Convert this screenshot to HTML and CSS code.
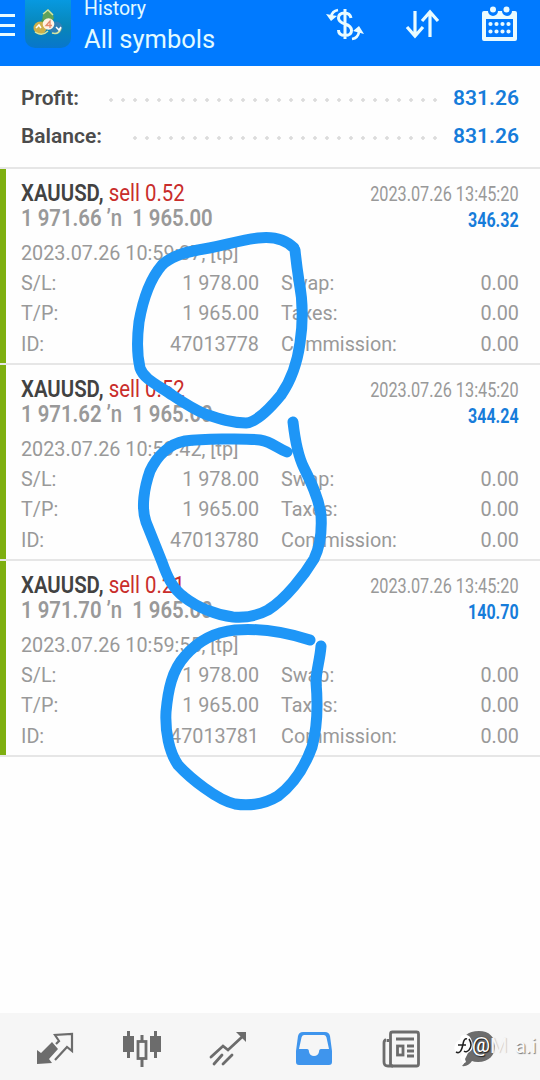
FILE: index.html
```
<!DOCTYPE html>
<html lang="en">
<head>
  <meta charset="UTF-8" />
  <meta name="viewport" content="width=device-width, initial-scale=1.0"/>
  <title>History</title>
  <link rel="stylesheet" href="styles.css">
</head>
<body>
  <div class="app">
    <header class="header">
      <div class="burger"><i></i><i></i><i></i></div>
      <div class="logo">
        <svg width="46" height="48" viewBox="0 0 46 48">
          <path d="M22 9l7 9-5 7-9-1z" fill="#4f9a4c"/>
          <circle cx="23" cy="17" r="5.5" fill="#5fa25a"/>
          <circle cx="15" cy="28" r="6.500" fill="#cdb04a"/>
          <circle cx="31" cy="28" r="6.500" fill="#3180b5"/>
          <path d="M10 32q7 5 13-1M27 33q7 2 9-5M18 14l5-4 5 5" fill="none" stroke="#d5e6a2" stroke-width="1.500"/>
          <circle cx="23.500" cy="24" r="5.800" fill="#fff3e5"/>
          <path d="M25 28v-7l-4 4.500h6" fill="none" stroke="#e48a6d" stroke-width="1.300"/>
          <path d="M11 28l3-3 2 3M31 27l3 3 2-3" fill="none" stroke="#fff" stroke-width="1.500"/>
        </svg>
      </div>
      <div class="titles">
        <div class="title-small">History</div>
        <div class="title-big">All symbols</div>
      </div>
      <div class="actions">
        <svg width="38" height="36" viewBox="0 0 38 36" fill="none" stroke="#e9fbff" stroke-width="3">
          <path d="M25 12q-1-5-6.500-5-6 0-6 5 0 4 6.500 6 6.500 2 6.500 6.500 0 5-6.500 5-6.500 0-6.500-5.500M19 3v30"/>
          <path d="M12 4q-6 1-7 7M26 33q6-1 7-7" stroke-width="2.600"/>
          <path d="M0 8l5 7 6-5zM27 25l6-5 5 8z" fill="#e9fbff" stroke="none"/>
        </svg>
        <svg width="36" height="32" viewBox="0 0 36 32" fill="none" stroke="#e9fbff" stroke-width="3.200">
          <path d="M10 2v25M2 18l8 9 8-9M25 28V3M17 12l8-9 8 9"/>
        </svg>
        <svg width="36" height="36" viewBox="0 0 36 36">
          <path d="M2 5h4a5 5 0 0 0 10 0h4a5 5 0 0 0 10 0h3a2 2 0 0 1 2 2v26a2 2 0 0 1-2 2H2a2 2 0 0 1-2-2V7q0-2 2-2zM4 13v18h27V13z" fill="#e9fbff" fill-rule="evenodd"/>
          <circle cx="11" cy="3.500" r="3" fill="#e9fbff"/><circle cx="24.500" cy="3.500" r="3" fill="#e9fbff"/>
          <path d="M8.500 18h20M8.500 25.500h20" stroke="#e9fbff" stroke-width="4.200" stroke-linecap="round" stroke-dasharray="0 6"/>
        </svg>
      </div>
    </header>

    <section class="summary">
      <div class="sum-row"><span>Profit:</span><div class="dots"></div><b>831.26</b></div>
      <div class="sum-row"><span>Balance:</span><div class="dots"></div><b>831.26</b></div>
    </section>

    <main class="deals" id="deals"></main>

    <nav class="tabs">
      <a><svg width="38" height="34" viewBox="0 0 38 34">
        <path d="M1 32V18l4 3L16 10l6 7-9 10 3 4z" fill="#6c6c6c"/>
        <path d="M20 12l3-3-4-6 17-1v17l-5-4-12 13" fill="none" stroke="#6c6c6c" stroke-width="2.200"/>
      </svg></a>
      <a><svg width="40" height="38" viewBox="0 0 40 38">
        <path d="M1 6h4V1h3v5h4v16H8v6H5v-6H1zM28 6h4V1h3v5h4v16h-4v6h-3v-6h-4z" fill="#6c6c6c"/>
        <path d="M20 5v7M20 29v8" stroke="#6c6c6c" stroke-width="3"/><rect x="16" y="11.500" width="8" height="17" fill="none" stroke="#6c6c6c" stroke-width="2.800"/>
      </svg></a>
      <a><svg width="38" height="36" viewBox="0 0 38 36" fill="none" stroke="#6c6c6c" stroke-width="2.800" stroke-linecap="round">
        <path d="M2 26l12-11 5 4L33 6M5 33l8-9M14 33l9-9"/>
        <path d="M27 1h10v10z" fill="#6c6c6c" stroke="none"/>
      </svg></a>
      <a><svg width="38" height="36" viewBox="0 0 38 36">
        <path d="M8 1h22q4 0 5 4l2 15v11q0 3-3 3H4q-3 0-3-3V20L3 5q1-4 5-4zM9 4Q7 4 6.500 6.500L4 18h8q2 0 2 3 1 4 5 4t5-4q0-3 2-3h8L31.500 6.500Q31 4 29 4z" fill="#3f95ed" fill-rule="evenodd"/>
      </svg></a>
      <a><svg width="38" height="38" viewBox="0 0 38 38" fill="none" stroke="#6c6c6c" stroke-width="2.800">
        <rect x="8.500" y="2" width="28" height="34" rx="2"/>
        <path d="M4 10q-2 0-2 3v19q0 4 4 4h5M6 9v3M14 9h18M25 16h7M25 21h7M25 26h7"/><rect x="15.500" y="16" width="5.500" height="9"/>
      </svg></a>
      <a class="chat"><svg width="40" height="38" viewBox="0 0 40 38">
        <path d="M23 1c10 0 16 6 16 15s-6 16-17 16q-4 0-6-1-4 6-10 5 3-3 3-8-4-5-4-12C5 7 12 1 23 1z" fill="#6c6c6c"/>
      </svg></a>
      <div class="watermark">
        <svg width="20" height="34" viewBox="0 0 20 34"><path d="M7 3Q15-1 18 8q3 8-4 12l-3 6 1 3-3 2-3-7 2-4Q-2 20 1 12q2-5 5-5z" fill="#fff"/><path d="M2 19q5 3 7-8 1-6 4-5M4 12h8M15 6q4 6 0 11-3 3-5 1" fill="none" stroke="#222" stroke-width="1.500"/></svg>
        <span class="at">@</span><span class="ghost">M</span><span class="ai">a.i</span>
      </div>
    </nav>

    <!-- marker strokes over the list -->
    <svg class="marker" width="540" height="1080" viewBox="0 0 540 1080">
      <path d="M294 248C286 240 274 236 258 238C240 240 219 247 198 250C181 253 170 257 162 265C150 279 143 299 139 322C137 338 137 355 140 368C144 380 160 386 172 395C184 403 193 409 205 414C220 419 232 423 246 423C258 422 272 406 281 395C290 382 297 365 300 343C303 323 303 301 299 281C297 268 296 260 295 250"/>
      <path d="M293 422C295 440 298 456 304 468C312 484 319 499 321 515C322 531 321 545 314 559C305 574 286 599 268 610C257 616 245 618 233 617C217 615 198 608 184 597C172 588 167 576 162 562L146 522C141 508 144 488 150 471C157 456 169 444 185 441C200 439 245 438 260 440C272 442 277 448 287 452"/>
      <path d="M321 646C320 660 316 671 316 682C318 705 318 725 312 747C305 766 294 784 278 796C265 804 249 806 235 804C217 800 190 778 178 765C169 752 165 731 166 712C168 690 172 670 185 656C198 641 215 632 235 630C258 628 285 632 310 640"/>
    </svg>
  </div>

  <script>
    const deals = [
      { lot: "0.52", open: "1 971.66", time: "10:59:37", id: "47013778", profit: "346.32" },
      { lot: "0.52", open: "1 971.62", time: "10:59:42", id: "47013780", profit: "344.24" },
      { lot: "0.21", open: "1 971.70", time: "10:59:55", id: "47013781", profit: "140.70" }
    ];

    document.getElementById("deals").innerHTML = deals.map(d => `
      <article class="deal">
        <div class="line symbol-line">
          <div class="cond symbol"><b>XAUUSD,</b> <span>sell ${d.lot}</span></div>
          <div class="cond right close-time">2023.07.26 13:45:20</div>
        </div>
        <div class="line price-line">
          <div class="cond price">${d.open} <span class="arrow">’n</span>&nbsp; 1 965.00</div>
          <div class="cond right profit">${d.profit}</div>
        </div>
        <div class="open-time">2023.07.26 ${d.time}, [tp]</div>
        <div class="details">
          <span>S/L:</span><span class="num">1 978.00</span><span>Swap:</span><span class="num">0.00</span>
          <span>T/P:</span><span class="num">1 965.00</span><span>Taxes:</span><span class="num">0.00</span>
          <span>ID:</span><span class="num">${d.id}</span><span>Commission:</span><span class="num">0.00</span>
        </div>
      </article>`).join("");
  </script>
</body>
</html>
```
FILE: styles.css
```
* {
  box-sizing: border-box;
}

body {
  margin: 0;
  background: #fefefe;
  font-family: Roboto, sans-serif;
  color: #999;
  overflow: hidden;
}

.app {
  position: relative;
  width: 540px;
  height: 1080px;
  display: flex;
  flex-direction: column;
}

.header {
  height: 66px;
  background: #007aff;
  color: #e2faff;
  display: flex;
  flex-shrink: 0;
}

.burger {
  width: 25px;
  padding-top: 14px;
}

.burger i {
  display: block;
  width: 15px;
  height: 3px;
  margin-bottom: 6.5px;
  background: #e9fbff;
}

.logo {
  width: 46px;
  height: 48px;
  border-radius: 0 0 10px 10px;
  background: linear-gradient(#0799e0, #0886b8 55%, #0876cc);
}

.titles {
  padding-left: 13px;
  white-space: nowrap;
}

.title-small {
  font-size: 19.5px;
  line-height: 24px;
  margin-top: -3px;
}

.title-big {
  font-size: 25.5px;
  line-height: 34px;
  margin-top: 1px;
}

.actions {
  display: flex;
  margin-left: auto;
  padding: 6px 22px 0 0;
  gap: 41px;
}

.actions svg:nth-child(2) {
  margin-top: 3px;
}

.summary {
  height: 103px;
  padding: 13px 21px 0;
  border-bottom: 2px solid #e6e6e6;
  flex-shrink: 0;
}

.sum-row {
  height: 37.5px;
  line-height: 38px;
  display: flex;
  font-size: 21px;
  font-weight: 600;
  color: #4b4b4b;
}

.sum-row b {
  width: 78px;
  text-align: right;
  font-weight: 600;
  color: #167cda;
}

.dots {
  flex: 1;
  height: 4px;
  margin: 19px 0 0 26px;
  background: radial-gradient(circle, #dcdcdc 1.5px, transparent 2px) right top / 12px 4px repeat-x;
}

.deal {
  height: 196px;
  padding: 10px 21px 0;
  background: linear-gradient(#7eaf10, #7eaf10) left top / 6px 194px no-repeat;
  border-bottom: 2px solid #e6e6e6;
}

.line {
  display: flex;
  justify-content: space-between;
  height: 26px;
  line-height: 28px;
  white-space: nowrap;
}

.cond {
  transform: scaleX(.85);
  transform-origin: left center;
}

.cond.right {
  transform-origin: right center;
}

.symbol {
  font-size: 24px;
  color: #c92d2b;
}

.symbol b {
  font-weight: 600;
  color: #424242;
}

.close-time {
  font-size: 20px;
  line-height: 31px;
  transform: scaleX(.813);
}

.price {
  font-size: 23.5px;
  line-height: 27px;
  font-weight: 600;
  transform: scaleX(.865);
}

.arrow {
  font-weight: 500;
}

.profit {
  font-size: 19.5px;
  font-weight: 700;
  color: #167cda;
  line-height: 31px;
  transform: scaleX(.82);
}

.open-time {
  height: 30px;
  margin-top: 7px;
  font-size: 19.8px;
  line-height: 31px;
}

.details {
  display: grid;
  grid-template-columns: 120px 118px 140px 1fr;
  font-size: 19.8px;
  line-height: 30.5px;
  padding-top: .6px;
}

.details span:nth-child(4n + 3) {
  padding-left: 22px;
}

.num {
  text-align: right;
}

.tabs {
  position: relative;
  height: 67px;
  margin-top: auto;
  padding: 0 12px;
  background: #f6f6f6;
  display: flex;
  flex-shrink: 0;
}

.tabs a {
  flex: 0 0 86.4px;
  height: 71px;
  display: flex;
  align-items: center;
  justify-content: center;
}

.tabs .chat {
  padding-right: 22px;
}

/* sits on top of the chat tab */
.watermark {
  position: absolute;
  right: 4px;
  top: 20px;
  display: flex;
  width: 82px;
  height: 34px;
  line-height: 26px;
  font-size: 20px;
}

.at {
  margin-left: -2px;
  color: #fff;
  font-size: 20px;
  line-height: 24px;
  font-weight: 500;
  text-shadow: 0 0 1px #111, 1px 1px 1px #222;
}

.ghost {
  color: #f6f6f6;
  text-shadow: 1px 0 1px #ccc;
}

.ai {
  margin-left: auto;
  color: #fafafa;
  text-shadow: 1px 1px 1px #777;
}

.marker {
  position: absolute;
  left: 0;
  top: 0;
  fill: none;
  stroke: #1e96f7;
  stroke-width: 11px;
  stroke-linecap: round;
  stroke-linejoin: round;
  pointer-events: none;
}
```
